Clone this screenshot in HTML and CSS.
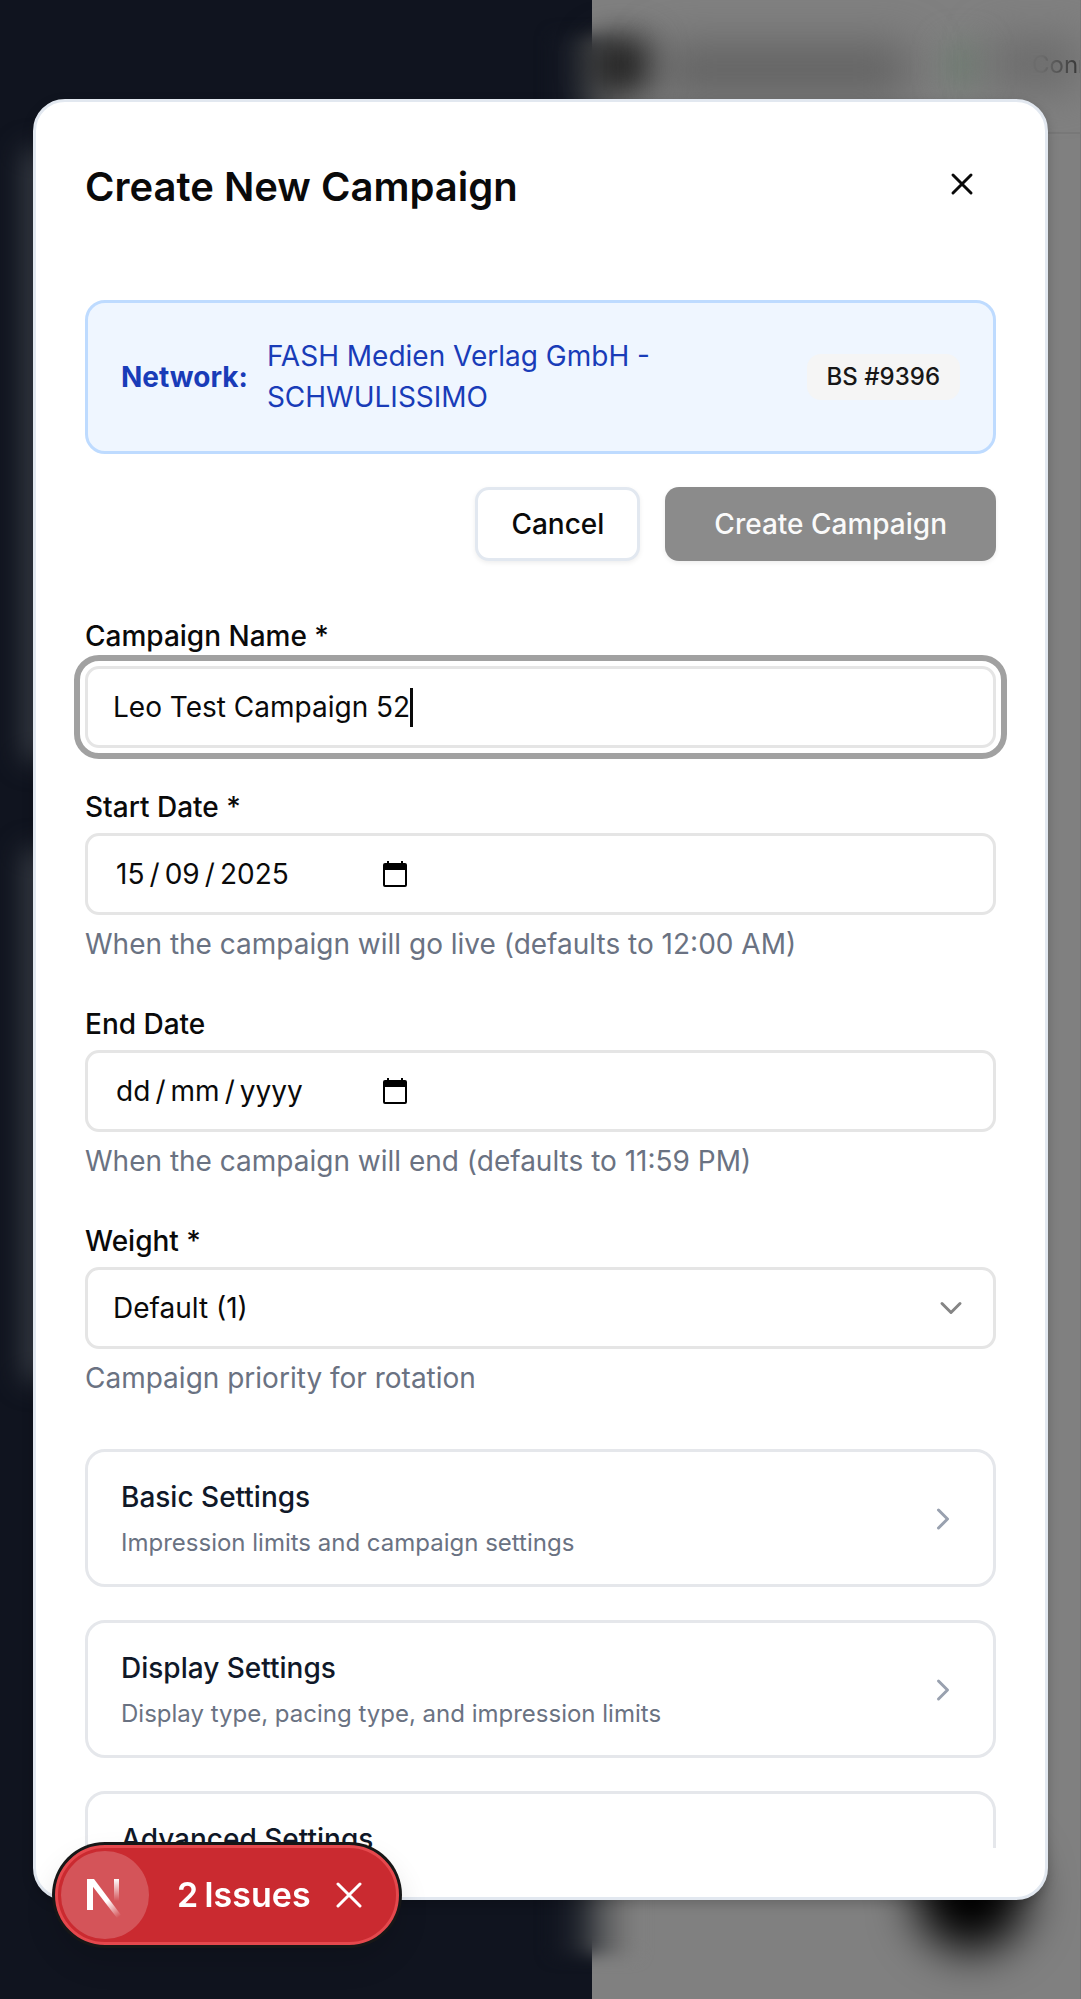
FILE: index.html
```html
<!DOCTYPE html>
<html lang="en">
<head>
<meta charset="utf-8">
<meta name="viewport" content="width=device-width, initial-scale=1">
<title>Create New Campaign</title>
<link rel="stylesheet" href="styles.css">
</head>
<body>
<div class="app">
  <div class="app-sidebar"></div>
  <div class="app-main">
    <div class="app-topbar"><span class="status">Conn</span></div>
  </div>
  <span class="blur blur-edge"></span>
  <span class="blur blur-glow blur-glow-top"></span>
  <span class="blur blur-glow blur-glow-bottom"></span>
  <span class="blur blur-logo"></span>
  <span class="blur blur-title"></span>
  <span class="blur blur-badge"></span>
  <span class="blur blur-status"></span>
  <span class="blur blur-fab"></span>
</div>

<div class="overlay">
  <section class="dialog" role="dialog" aria-labelledby="dialog-title">
    <header class="dialog-header">
      <h1 id="dialog-title" class="dialog-title">Create New Campaign</h1>
      <button class="icon-button" type="button" aria-label="Close">
        <svg width="36" height="36" viewBox="0 0 24 24" fill="none" stroke="currentColor" stroke-width="2" stroke-linecap="round"><path d="M18 6 6 18M6 6l12 12"/></svg>
      </button>
    </header>
    <form class="dialog-body">
      <div class="network">
        <strong class="network-label">Network:</strong>
        <span class="network-name">FASH Medien Verlag GmbH - SCHWULISSIMO</span>
        <span class="badge">BS #9396</span>
      </div>
      <div class="actions">
        <button class="button button-outline" type="button">Cancel</button>
        <button class="button button-primary" type="submit" disabled>Create Campaign</button>
      </div>

      <div class="field field-first">
        <label class="label" for="name">Campaign Name *</label>
        <div class="control control-focused">
          <input class="input input-fit" id="name" type="text" value="Leo Test Campaign 52">
          <span class="caret"></span>
        </div>
      </div>

      <div class="field field-start">
        <label class="label" for="start">Start Date *</label>
        <div class="control">
          <input class="input input-date" id="start" type="text" value="15&#8201;/&#8201;09&#8201;/&#8201;2025">
          <button class="date-button" type="button" aria-label="Pick start date">
            <svg width="26" height="26" viewBox="0 0 26 26"><path fill="currentColor" fill-rule="evenodd" d="M5 0h2v2h12V0h2v2h2a2 2 0 0 1 2 2v20a2 2 0 0 1-2 2H3a2 2 0 0 1-2-2V4a2 2 0 0 1 2-2h2zM3 9v15h20V9z"/></svg>
          </button>
        </div>
        <p class="help">When the campaign will go live (defaults to 12:00 AM)</p>
      </div>

      <div class="field">
        <label class="label" for="end">End Date</label>
        <div class="control">
          <input class="input input-date" id="end" type="text" placeholder="dd&#8201;/&#8201;mm&#8201;/&#8201;yyyy">
          <button class="date-button" type="button" aria-label="Pick end date">
            <svg width="26" height="26" viewBox="0 0 26 26"><path fill="currentColor" fill-rule="evenodd" d="M5 0h2v2h12V0h2v2h2a2 2 0 0 1 2 2v20a2 2 0 0 1-2 2H3a2 2 0 0 1-2-2V4a2 2 0 0 1 2-2h2zM3 9v15h20V9z"/></svg>
          </button>
        </div>
        <p class="help">When the campaign will end (defaults to 11:59 PM)</p>
      </div>

      <div class="field">
        <label class="label" for="weight">Weight *</label>
        <div class="control">
          <select class="input select" id="weight"><option>Default (1)</option></select>
          <svg class="select-arrow" width="36" height="36" viewBox="0 0 24 24" fill="none" stroke="currentColor" stroke-width="2" stroke-linecap="round" stroke-linejoin="round"><path d="m6 9 6 6 6-6"/></svg>
        </div>
        <p class="help">Campaign priority for rotation</p>
      </div>

      <div class="sections">
        <button class="section" type="button">
          <span class="section-text">
            <span class="section-title">Basic Settings</span>
            <span class="section-note">Impression limits and campaign settings</span>
          </span>
          <svg class="section-arrow" width="36" height="36" viewBox="0 0 24 24" fill="none" stroke="currentColor" stroke-width="2" stroke-linecap="round" stroke-linejoin="round"><path d="m9 18 6-6-6-6"/></svg>
        </button>
        <button class="section" type="button">
          <span class="section-text">
            <span class="section-title">Display Settings</span>
            <span class="section-note">Display type, pacing type, and impression limits</span>
          </span>
          <svg class="section-arrow" width="36" height="36" viewBox="0 0 24 24" fill="none" stroke="currentColor" stroke-width="2" stroke-linecap="round" stroke-linejoin="round"><path d="m9 18 6-6-6-6"/></svg>
        </button>
        <button class="section" type="button">
          <span class="section-text">
            <span class="section-title">Advanced Settings</span>
          </span>
        </button>
      </div>
    </form>
  </section>
</div>

<div class="issues">
  <span class="issues-logo">
    <svg width="88" height="88" viewBox="0 0 88 88">
      <defs>
        <linearGradient id="fade-diagonal" gradientUnits="userSpaceOnUse" x1="46" y1="50" x2="58" y2="66"><stop stop-color="#fff"/><stop offset="1" stop-color="#fff" stop-opacity="0"/></linearGradient>
        <linearGradient id="fade-stem" gradientUnits="userSpaceOnUse" x1="0" y1="28" x2="0" y2="50"><stop stop-color="#fff"/><stop offset="1" stop-color="#fff" stop-opacity="0"/></linearGradient>
      </defs>
      <path d="M26 28h6v31h-6z" fill="#fff"/>
      <path d="M26 28h7l27 36-4 3z" fill="url(#fade-diagonal)"/>
      <path d="M53 28h5v23h-5z" fill="url(#fade-stem)"/>
    </svg>
  </span>
  <button class="issues-count" type="button"><span>2</span><span>Issues</span></button>
  <button class="issues-close" type="button" aria-label="Hide issues">
    <svg width="26" height="26" viewBox="0 0 26 26" fill="none" stroke="currentColor" stroke-width="3" stroke-linecap="round"><path d="M2 2l22 22M24 2 2 24"/></svg>
  </button>
</div>
</body>
</html>
```
FILE: styles.css
```css
* { box-sizing: border-box; }

body {
  margin: 0;
  height: 100vh;
  overflow: hidden;
  font-family: Inter, "Liberation Sans", sans-serif;
  font-size: 28px;
  line-height: 32px;
  color: #0a0a0a;
}

button, input, select { font: inherit; color: inherit; }
button { margin: 0; padding: 0; border: 0; background: none; }
svg { display: block; flex: none; }

/* Dimmed application behind the dialog */
.app {
  position: fixed;
  inset: 0;
  display: flex;
  overflow: hidden;
  background: #808080;
}
.app-sidebar { flex: 0 0 592px; background: #10141f; }
.app-main { flex: 1; min-width: 0; border-right: 1px solid #787878; }
.app-topbar {
  display: flex;
  height: 134px;
  padding: 49px 0 0 440px;
  border-bottom: 2px solid #787878;
  overflow: hidden;
}
.status {
  position: relative;
  z-index: 1;
  font-size: 24px;
  white-space: nowrap;
  color: transparent;
  background: linear-gradient(90deg, #6c6c6c 10px, #333 50px);
  background-clip: text;
}

.blur { position: absolute; }
.blur-edge {
  top: 36px;
  bottom: 44px;
  left: 552px;
  width: 84px;
  background: linear-gradient(90deg, #10141f, #1f232c 28%, #3a3d42 45%, #5a5c5e 62%, #707070 80%, #808080);
  filter: blur(8px);
}
.blur-glow {
  left: 24px;
  width: 60px;
  background: #3a3f47;
  filter: blur(14px);
}
.blur-glow-top { top: 150px; height: 610px; }
.blur-glow-bottom { top: 850px; height: 530px; }
.blur-logo {
  top: 36px;
  left: 590px;
  width: 64px;
  height: 58px;
  border-radius: 20px;
  background: #262626;
  filter: blur(16px);
}
.blur-title {
  top: 48px;
  left: 660px;
  width: 250px;
  height: 44px;
  background: #5c5c5c;
  filter: blur(24px);
}
.blur-badge {
  top: 45px;
  left: 948px;
  width: 30px;
  height: 40px;
  background: #6a7b6e;
  filter: blur(16px);
}
.blur-status {
  top: 40px;
  left: 990px;
  right: 0;
  height: 48px;
  background: #6a6a6a;
  filter: blur(22px);
}
.blur-fab {
  right: 54px;
  bottom: 48px;
  width: 112px;
  height: 112px;
  border-radius: 50%;
  background: #000;
  filter: blur(23px);
}

/* Dialog */
.overlay {
  position: fixed;
  inset: 0;
  display: flex;
  padding: 99px 33px;
}
.dialog {
  flex: 1;
  min-width: 0;
  display: flex;
  flex-direction: column;
  padding: 49px;
  border: 3px solid #e2e8f0;
  border-radius: 32px;
  background: #fff;
  box-shadow: 0 4px 12px rgba(0, 0, 0, 0.2);
}
.dialog-header {
  display: flex;
  align-items: center;
  justify-content: space-between;
  padding: 12px 10px 0 0;
  margin-bottom: 89px;
}
.dialog-title { margin: 0; font-size: 40px; line-height: 48px; font-weight: 600; }
.icon-button { width: 48px; height: 48px; padding: 3px 6px 9px; }
.dialog-body {
  flex: 1;
  min-height: 0;
  margin: 0 -49px;
  padding: 0 49px;
  overflow: hidden;
}

.network {
  display: flex;
  align-items: center;
  gap: 19px;
  padding: 33px;
  border: 3px solid #bedbff;
  border-radius: 20px;
  background: #eff6ff;
  color: #193cb8;
  line-height: 41px;
}
.network-label { font-weight: 700; }
.network-name { flex: 1; }
.badge {
  padding: 0 20px;
  border-radius: 14px;
  background: #f5f5f5;
  color: #171717;
  font-size: 24px;
  line-height: 46px;
  font-weight: 500;
}

.actions {
  display: flex;
  justify-content: flex-end;
  gap: 25px;
  margin-top: 33px;
}
.button {
  height: 74px;
  border-radius: 14px;
  font-weight: 500;
  box-shadow: 0 2px 5px rgba(0, 0, 0, 0.07);
}
.button-outline { padding: 0 33px; border: 3px solid #e2e8f0; background: #fff; }
.button-primary { padding: 0 49px; background: #8b8b8b; color: #fafafa; }

/* Form fields */
.field { display: flex; flex-direction: column; margin-top: 48px; }
.field-first { gap: 4px; margin-top: 59px; }
.field-start { margin-top: 43px; }
.label { margin-bottom: 10px; font-weight: 500; }
.control {
  position: relative;
  display: flex;
  align-items: center;
  height: 82px;
  padding: 0 25px;
  border: 3px solid #e5e5e5;
  border-radius: 14px;
}
.control-focused { outline: 6px solid #a1a1a1; outline-offset: 5px; }
.input {
  padding: 0;
  border: 0;
  outline: 0;
  background: transparent;
  line-height: 36px;
}
.input::placeholder { color: inherit; opacity: 1; }
.input-fit { field-sizing: content; }
.caret { width: 3px; height: 39px; background: #0a0a0a; }
.input-date { width: 269px; padding-left: 3px; }
.date-button { width: 26px; height: 26px; color: #000; }
.select { flex: 1; appearance: none; }
.select-arrow {
  position: absolute;
  right: 24px;
  color: #858585;
  pointer-events: none;
}
.help { margin: 13px 0 0; color: #6a7282; }

/* Collapsible settings */
.sections { display: flex; flex-direction: column; gap: 33px; margin-top: 55px; }
.section {
  display: flex;
  align-items: center;
  justify-content: space-between;
  padding: 27px 32px 25px 33px;
  border: 3px solid #e5e7eb;
  border-radius: 20px;
  text-align: left;
}
.section-text { display: flex; flex-direction: column; gap: 12px; }
.section-title { color: #101828; line-height: 36px; font-weight: 500; }
.section-note { color: #6a7282; font-size: 24px; }
.section-arrow { color: #99a1af; }

/* Dev issues indicator */
.issues {
  position: fixed;
  left: 55px;
  bottom: 54px;
  display: flex;
  align-items: center;
  padding: 3px 34px 3px 3px;
  border: 3px solid #e5484d;
  border-radius: 50px;
  background: #ca2a30;
  color: #fff;
  box-shadow: 0 0 0 3px #171717, 0 16px 32px rgba(0, 0, 0, 0.14);
}
.issues-logo {
  border-radius: 50%;
  background: rgba(255, 255, 255, 0.2);
}
.issues-count {
  display: flex;
  gap: 6px;
  margin: 0 25px 0 28px;
  font-size: 34px;
  line-height: 40px;
  font-weight: 600;
}
.issues-close { width: 26px; height: 26px; }
```
